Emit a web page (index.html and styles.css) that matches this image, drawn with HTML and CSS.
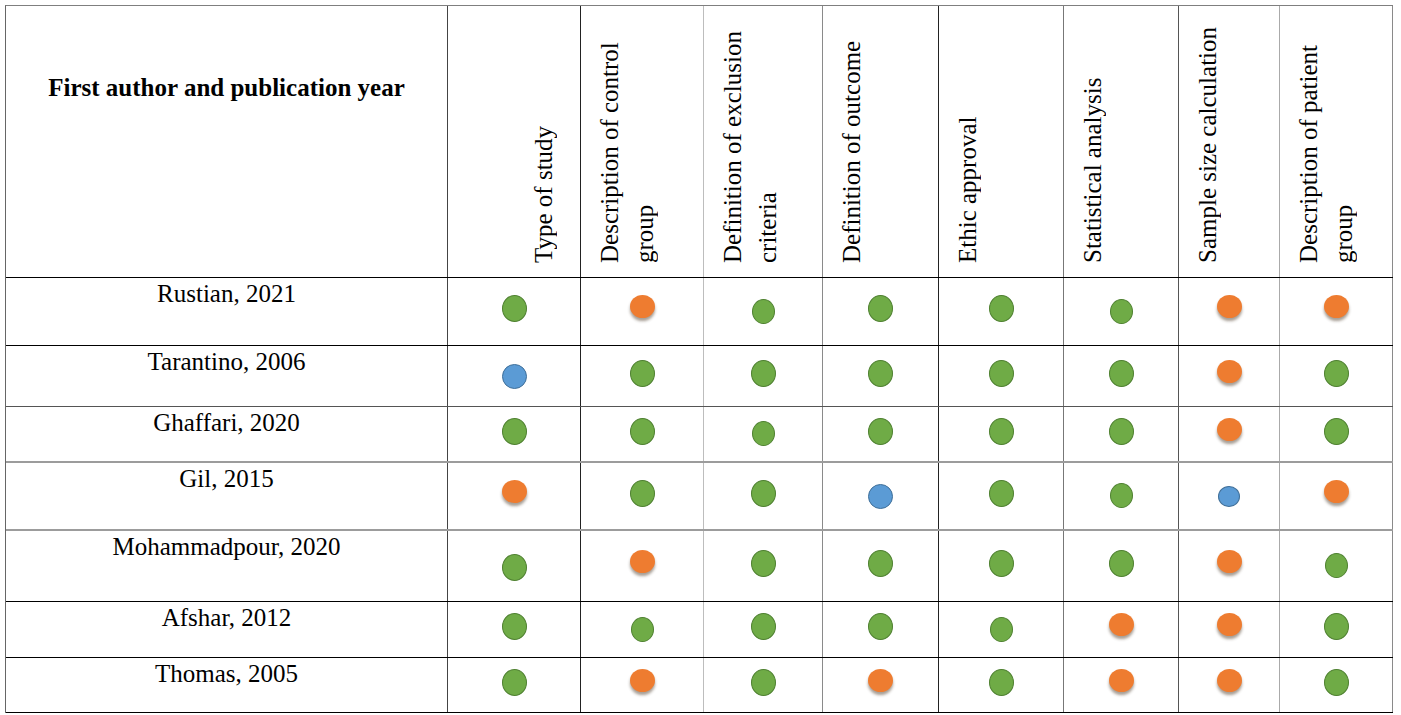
FILE: index.html
```html
<!DOCTYPE html>
<html lang="en">
<head>
<meta charset="utf-8">
<title>Quality assessment</title>
<link rel="stylesheet" href="styles.css">
</head>
<body>
<div class="qtable">
  <div class="row head">
    <div class="cell hfirst">First author and publication year</div>
    <div class="cell hrot hrot-type"><span class="vtext">Type of study</span></div>
    <div class="cell hrot"><span class="vtext">Description of control group</span></div>
    <div class="cell hrot"><span class="vtext">Definition of exclusion criteria</span></div>
    <div class="cell hrot"><span class="vtext">Definition of outcome</span></div>
    <div class="cell hrot"><span class="vtext">Ethic approval</span></div>
    <div class="cell hrot"><span class="vtext">Statistical analysis</span></div>
    <div class="cell hrot"><span class="vtext">Sample size calculation</span></div>
    <div class="cell hrot"><span class="vtext">Description of patient group</span></div>
  </div>

  <div class="row r1">
    <div class="cell name">Rustian, 2021</div>
    <div class="cell mark"><span class="dot g"></span></div>
    <div class="cell mark"><span class="dot o"></span></div>
    <div class="cell mark"><span class="dot g s"></span></div>
    <div class="cell mark"><span class="dot g"></span></div>
    <div class="cell mark"><span class="dot g"></span></div>
    <div class="cell mark"><span class="dot g s"></span></div>
    <div class="cell mark"><span class="dot o"></span></div>
    <div class="cell mark"><span class="dot o"></span></div>
  </div>

  <div class="row r2">
    <div class="cell name">Tarantino, 2006</div>
    <div class="cell mark"><span class="dot b"></span></div>
    <div class="cell mark"><span class="dot g"></span></div>
    <div class="cell mark"><span class="dot g"></span></div>
    <div class="cell mark"><span class="dot g"></span></div>
    <div class="cell mark"><span class="dot g"></span></div>
    <div class="cell mark"><span class="dot g"></span></div>
    <div class="cell mark"><span class="dot o"></span></div>
    <div class="cell mark"><span class="dot g"></span></div>
  </div>

  <div class="row r3">
    <div class="cell name">Ghaffari, 2020</div>
    <div class="cell mark"><span class="dot g"></span></div>
    <div class="cell mark"><span class="dot g"></span></div>
    <div class="cell mark"><span class="dot g s"></span></div>
    <div class="cell mark"><span class="dot g"></span></div>
    <div class="cell mark"><span class="dot g"></span></div>
    <div class="cell mark"><span class="dot g"></span></div>
    <div class="cell mark"><span class="dot o"></span></div>
    <div class="cell mark"><span class="dot g"></span></div>
  </div>

  <div class="row r4">
    <div class="cell name">Gil, 2015</div>
    <div class="cell mark"><span class="dot o"></span></div>
    <div class="cell mark"><span class="dot g"></span></div>
    <div class="cell mark"><span class="dot g"></span></div>
    <div class="cell mark"><span class="dot b"></span></div>
    <div class="cell mark"><span class="dot g"></span></div>
    <div class="cell mark"><span class="dot g s"></span></div>
    <div class="cell mark"><span class="dot b s"></span></div>
    <div class="cell mark"><span class="dot o"></span></div>
  </div>

  <div class="row r5">
    <div class="cell name">Mohammadpour, 2020</div>
    <div class="cell mark"><span class="dot g lo"></span></div>
    <div class="cell mark"><span class="dot o"></span></div>
    <div class="cell mark"><span class="dot g"></span></div>
    <div class="cell mark"><span class="dot g"></span></div>
    <div class="cell mark"><span class="dot g"></span></div>
    <div class="cell mark"><span class="dot g"></span></div>
    <div class="cell mark"><span class="dot o"></span></div>
    <div class="cell mark"><span class="dot g s"></span></div>
  </div>

  <div class="row r6">
    <div class="cell name">Afshar, 2012</div>
    <div class="cell mark"><span class="dot g"></span></div>
    <div class="cell mark"><span class="dot g s"></span></div>
    <div class="cell mark"><span class="dot g"></span></div>
    <div class="cell mark"><span class="dot g"></span></div>
    <div class="cell mark"><span class="dot g s"></span></div>
    <div class="cell mark"><span class="dot o"></span></div>
    <div class="cell mark"><span class="dot o"></span></div>
    <div class="cell mark"><span class="dot g"></span></div>
  </div>

  <div class="row r7">
    <div class="cell name">Thomas, 2005</div>
    <div class="cell mark"><span class="dot g"></span></div>
    <div class="cell mark"><span class="dot o"></span></div>
    <div class="cell mark"><span class="dot g"></span></div>
    <div class="cell mark"><span class="dot o"></span></div>
    <div class="cell mark"><span class="dot g"></span></div>
    <div class="cell mark"><span class="dot o"></span></div>
    <div class="cell mark"><span class="dot o"></span></div>
    <div class="cell mark"><span class="dot g"></span></div>
  </div>
</div>
</body>
</html>
```

FILE: styles.css
```css
html, body {
  background: #ffffff;
}

body {
  margin: 5px;
  font-family: "Liberation Serif", "Times New Roman", serif;
  color: #000000;
}

.qtable {
  display: flex;
  flex-direction: column;
  width: max-content;
  border-top: 1px solid #7f7f7f;
  border-left: 1px solid #666666;
}

.row {
  display: grid;
  grid-template-columns: 442px 133px 123px 119px 116px 125px 115px 101px 113px;
  box-sizing: border-box;
  border-bottom: 1px solid #000000;
}

.head { height: 272px; }
.r1 { height: 68px; }
.r2 { height: 61px; border-bottom-color: #555555; }
.r3 { height: 56px; border-bottom: 2px solid #9c9c9c; }
.r4 { height: 68px; border-bottom: 2px solid #9c9c9c; }
.r5 { height: 71px; }
.r6 { height: 56px; }
.r7 { height: 55px; }

.cell {
  box-sizing: border-box;
  border-right: 1px solid #444444;
  min-width: 0;
}

.cell:nth-child(2) { border-right-color: #222222; }
.cell:nth-child(3) { border-right-color: #bdbdbd; }
.cell:nth-child(4) { border-right-color: #8a8a8a; }
.cell:nth-child(5) { border-right-color: #222222; }
.cell:nth-child(6) { border-right-color: #777777; }
.cell:nth-child(7) { border-right-color: #555555; }
.cell:nth-child(8) { border-right-color: #aaaaaa; }
.cell:nth-child(9) { border-right-color: #8a8a8a; }

/* header */
.hfirst {
  padding-top: 68px;
  text-align: center;
  font-weight: bold;
  font-size: 25px;
  line-height: 28px;
}

.hrot {
  display: flex;
  align-items: flex-end;
  padding: 0 0 14px 11px;
}

.hrot-type {
  padding-left: 78px;
}

.vtext {
  writing-mode: vertical-rl;
  transform: rotate(180deg);
  height: 248px;
  font-size: 25px;
  line-height: 35px;
  white-space: normal;
}

/* body */
.name {
  padding-top: 2px;
  text-align: center;
  font-size: 25px;
  line-height: 28px;
}

.mark {
  display: flex;
  align-items: center;
  justify-content: center;
}

.dot {
  display: block;
  box-sizing: border-box;
  border-radius: 50%;
}

.dot.g {
  width: 25px;
  height: 27px;
  background: #6fab46;
  border: 1.5px solid #4f8131;
  margin-bottom: 6px;
}

.dot.g.s {
  width: 23px;
  height: 25px;
  margin-bottom: 1px;
}

.dot.g.lo {
  margin-bottom: 0;
  margin-top: 3px;
}

.dot.o {
  width: 25px;
  height: 23px;
  background: #ee7c30;
  box-shadow: 0 3px 3px rgba(60, 40, 20, 0.45);
  margin-bottom: 10px;
}

.dot.b {
  width: 25px;
  height: 25px;
  background: #5b9bd5;
  border: 1.5px solid #3f6f99;
  margin-bottom: 0;
}

.dot.b.s {
  width: 22px;
  height: 21px;
  margin-bottom: 0;
  margin-top: 1px;
}
```
